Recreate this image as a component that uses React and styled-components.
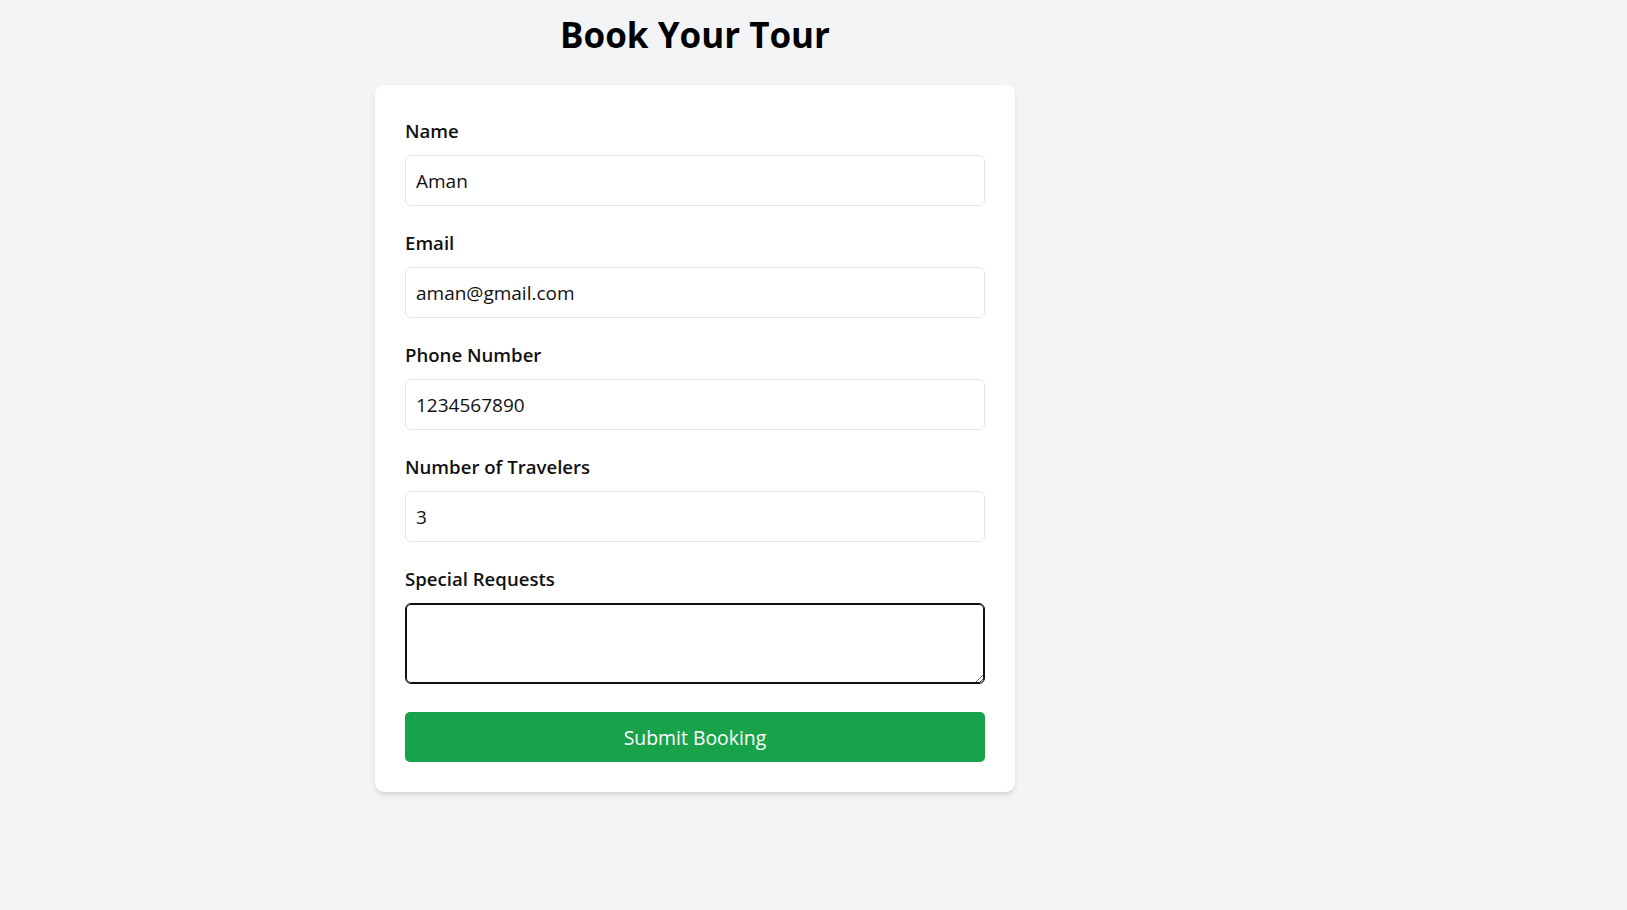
import React from "react";
import styled, { createGlobalStyle } from "styled-components";

const GlobalStyle = createGlobalStyle`
  html, body {
    margin: 0;
    padding: 0;
    background: #f3f4f6;
    font-family: "Open Sans", "Noto Sans", Arial, sans-serif;
    color: #111;
  }
  * { box-sizing: border-box; }
`;

const Page = styled.main`
  max-width: 1390px;
  min-height: 910px;
  padding: 15px 0 40px;
`;

const Title = styled.h1`
  margin: 0 0 30px;
  text-align: center;
  font-size: 35px;
  line-height: 40px;
  font-weight: 700;
  color: #000;
`;

const Card = styled.form`
  width: 640px;
  margin: 0 auto;
  padding: 30px;
  background: #fff;
  border-radius: 9px;
  box-shadow: 0 4px 6px -1px rgba(0, 0, 0, 0.1), 0 2px 4px -2px rgba(0, 0, 0, 0.1);
  display: flex;
  flex-direction: column;
  gap: 21px;
`;

const Field = styled.div`
  display: flex;
  flex-direction: column;
`;

const Label = styled.label`
  font-size: 18.6px;
  line-height: 30px;
  padding-top: 1px;
  font-weight: 600;
  margin-bottom: 9px;
  color: #111;
`;

const Input = styled.input`
  width: 100%;
  height: 51px;
  padding: 0 10px;
  border: 1px solid #e2e4e8;
  border-radius: 6px;
  font-family: inherit;
  font-size: 19px;
  color: #111;
  background: #fff;
  outline: none;
`;

const TextArea = styled.textarea`
  width: 100%;
  height: 81px;
  padding: 10px 10px;
  border: 1px solid ${(p) => (p.$active ? "#111" : "#e2e4e8")};
  box-shadow: ${(p) => (p.$active ? "inset 0 0 0 1px #111" : "none")};
  border-radius: 6px;
  font-family: inherit;
  font-size: 19px;
  line-height: 28px;
  color: #111;
  background: #fff;
  outline: none;
  resize: vertical;
`;

const Submit = styled.button`
  margin-top: 7px;
  width: 100%;
  height: 50px;
  border: none;
  border-radius: 5px;
  background: #18a34a;
  color: #fff;
  font-family: inherit;
  font-size: 19.4px;
  cursor: pointer;
`;

const fields = [
  { id: "name", label: "Name", type: "text", value: "Aman" },
  { id: "email", label: "Email", type: "email", value: "aman@gmail.com" },
  { id: "phone", label: "Phone Number", type: "tel", value: "1234567890" },
  { id: "travelers", label: "Number of Travelers", type: "text", value: "3" },
];

export default function App() {
  return (
    <>
      <GlobalStyle />
      <Page>
        <Title>Book Your Tour</Title>
        <Card onSubmit={(e) => e.preventDefault()}>
          {fields.map((f) => (
            <Field key={f.id}>
              <Label htmlFor={f.id}>{f.label}</Label>
              <Input id={f.id} type={f.type} defaultValue={f.value} />
            </Field>
          ))}
          <Field>
            <Label htmlFor="requests">Special Requests</Label>
            <TextArea id="requests" $active autoFocus />
          </Field>
          <Submit type="submit">Submit Booking</Submit>
        </Card>
      </Page>
    </>
  );
}
